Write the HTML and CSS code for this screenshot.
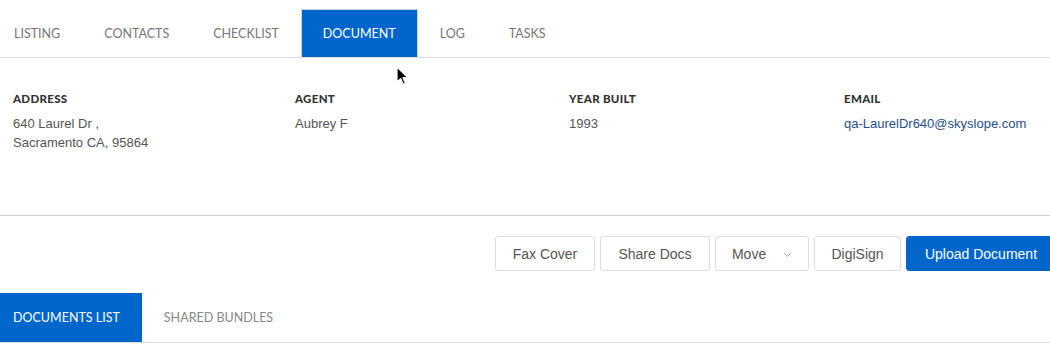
FILE: index.html
```html
<!DOCTYPE html>
<html lang="en">
<head>
  <meta charset="UTF-8">
  <title>Listing - Document</title>
  <link rel="stylesheet" href="styles.css">
</head>
<body>
  <!-- Main tabs -->
  <ul class="tabs">
    <li>Listing</li>
    <li>Contacts</li>
    <li>Checklist</li>
    <li class="active">Document</li>
    <li>Log</li>
    <li>Tasks</li>
  </ul>

  <!-- Listing summary -->
  <div class="summary">
    <div class="field">
      <div class="label">Address</div>
      <div class="value">640 Laurel Dr ,<br>Sacramento CA, 95864</div>
    </div>
    <div class="field">
      <div class="label">Agent</div>
      <div class="value">Aubrey F</div>
    </div>
    <div class="field">
      <div class="label">Year Built</div>
      <div class="value">1993</div>
    </div>
    <div class="field">
      <div class="label">Email</div>
      <div class="value"><a href="#">qa-LaurelDr640@skyslope.com</a></div>
    </div>
  </div>

  <div class="toolbar">
    <button class="btn btn-fax">Fax Cover</button>
    <button class="btn btn-share">Share Docs</button>
    <button class="btn btn-move">Move
      <svg width="9" height="6" viewBox="0 0 9 6"><path d="M1 1l3.5 3.5L8 1" fill="none" stroke="#aaa" stroke-width="1"/></svg>
    </button>
    <button class="btn btn-sign">DigiSign</button>
    <button class="btn btn-primary">Upload Document</button>
  </div>

  <ul class="subtabs">
    <li class="active">Documents List</li>
    <li>Shared Bundles</li>
  </ul>

  <svg class="cursor" width="14" height="20" viewBox="0 0 14 20">
    <path d="M1 1v15l3.6-3.4 2.6 5.6 2.3-1-2.6-5.5H12z" fill="#000" stroke="#fff" stroke-width="1.2" stroke-linejoin="round"/>
  </svg>
</body>
</html>
```

FILE: styles.css
```css
body {
  margin: 0;
  background: #fff;
  font-family: "Liberation Sans", Arial, sans-serif;
  overflow: hidden;
  position: relative;
}

ul {
  list-style: none;
  margin: 0;
  padding: 0;
}

.tabs {
  display: flex;
  margin-top: 9px;
  margin-left: -8px;
  border-bottom: 1px solid #ddd;
}

.tabs li,
.subtabs li {
  font-family: Lato, "Open Sans", sans-serif;
  font-size: 12.5px;
  text-transform: uppercase;
  color: #777;
}

.tabs li {
  height: 47px;
  line-height: 48px;
  padding: 0 21px;
  border: 1px solid transparent;
  border-bottom: none;
}

.tabs li.active {
  background: #0066cc;
  border-color: #c8d4e2;
  color: #fff;
}

.summary {
  display: grid;
  grid-template-columns: 282px 274px 275px 1fr;
  padding: 34px 13px 0;
  height: 123px;
  border-bottom: 1px solid #d0d0d0;
}

.label {
  font-family: Lato, "Open Sans", sans-serif;
  font-weight: 900;
  font-size: 11.5px;
  text-transform: uppercase;
  color: #333;
  letter-spacing: 0.3px;
  margin-bottom: 9px;
}

.value {
  font-size: 13px;
  line-height: 19px;
  color: #555;
}

.value a {
  color: #1f4f8a;
  text-decoration: none;
}

.toolbar {
  display: flex;
  justify-content: flex-end;
  gap: 5px;
  margin-top: 20px;
  margin-right: -6px;
}

.btn {
  height: 35px;
  padding: 0;
  background: #fff;
  border: 1px solid #ddd;
  border-radius: 3px;
  font-family: "Liberation Sans", Arial, sans-serif;
  font-size: 14px;
  color: #555;
}

.btn-fax { width: 100px; }
.btn-share { width: 110px; }
.btn-move { width: 94px; }
.btn-sign { width: 87px; }

.btn-move svg {
  margin-left: 13px;
  vertical-align: middle;
}

.btn-primary {
  width: 150px;
  background: #0066cc;
  border-color: #0066cc;
  color: #fff;
}

.subtabs {
  display: flex;
  margin-top: 22px;
  border-bottom: 1px solid #ddd;
}

.subtabs li {
  height: 49px;
  line-height: 50px;
  padding: 0 22px 0 13px;
  color: #888;
}

.subtabs li + li {
  padding-left: 22px;
}

.subtabs li.active {
  background: #0066cc;
  color: #fff;
}

.cursor {
  position: absolute;
  left: 396px;
  top: 66px;
}
```
